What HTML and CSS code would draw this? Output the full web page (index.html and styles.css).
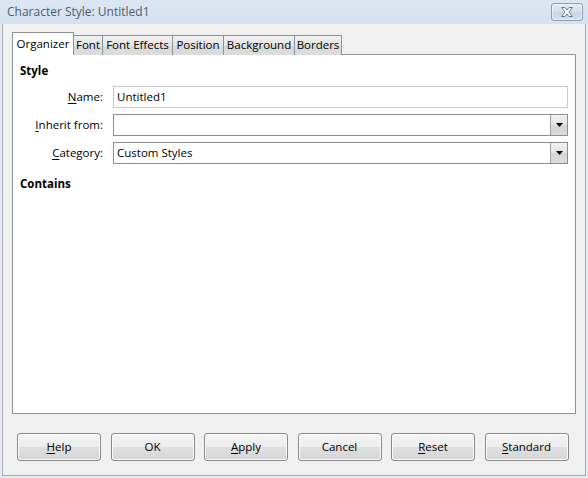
FILE: index.html
```html
<!DOCTYPE html>
<html>
<head>
<meta charset="utf-8">
<link rel="stylesheet" href="styles.css">
</head>
<body>
<div class="window">
  <div class="titlebar">
    <span class="title">Character Style: Untitled1</span>
    <div class="close">
      <svg width="16" height="12" viewBox="0 0 16 12"><path d="M2.5 1.5 H6 L8 4 L10 1.5 H13.5 L10 6 L13.5 10.5 H10 L8 8 L6 10.5 H2.5 L6 6 Z" fill="#f7f9fc" stroke="#6d7b8c" stroke-width="1" stroke-linejoin="round"/></svg>
    </div>
  </div>
  <div class="client">
    <div class="tabs">
      <div class="tab active t1">Organizer</div>
      <div class="tab t2">Font</div>
      <div class="tab t3">Font Effects</div>
      <div class="tab t4">Position</div>
      <div class="tab t5">Background</div>
      <div class="tab t6">Borders</div>
    </div>
    <div class="panel">
      <div class="heading">Style</div>
      <div class="form">
        <label class="lbl"><u>N</u>ame:</label>
        <div class="field text">Untitled1</div>
        <label class="lbl"><u>I</u>nherit from:</label>
        <div class="field combo"><span class="val"></span><span class="drop"><svg width="7" height="4" viewBox="0 0 7 4"><path d="M0 0 H7 L3.5 4 Z" fill="#000"/></svg></span></div>
        <label class="lbl"><u>C</u>ategory:</label>
        <div class="field combo"><span class="val">Custom Styles</span><span class="drop"><svg width="7" height="4" viewBox="0 0 7 4"><path d="M0 0 H7 L3.5 4 Z" fill="#000"/></svg></span></div>
      </div>
      <div class="heading contains">Contains</div>
    </div>
    <div class="buttons">
      <div class="btn"><u>H</u>elp</div>
      <div class="btn">OK</div>
      <div class="btn"><u>A</u>pply</div>
      <div class="btn">Cancel</div>
      <div class="btn"><u>R</u>eset</div>
      <div class="btn"><u>S</u>tandard</div>
    </div>
  </div>
</div>
</body>
</html>
```
FILE: styles.css
```css
* { box-sizing: border-box; }
html, body { margin: 0; padding: 0; }
body {
  width: 588px;
  height: 478px;
  overflow: hidden;
  font-family: "Open Sans", "Noto Sans", sans-serif;
  font-size: 11.5px;
  color: #000;
  background: #e4e9ef;
}
.window {
  width: 588px;
  height: 478px;
  display: flex;
  flex-direction: column;
  padding: 0 2px 2px 2px;
  background: linear-gradient(#dbe6f3, #d5e2f1 24px, #e6ebf1 24px, #e8ecf1);
}
.titlebar {
  height: 24px;
  display: flex;
  align-items: flex-start;
  justify-content: space-between;
  padding-left: 5px;
}
.title {
  font-size: 12px;
  color: #4f5b68;
  line-height: 26px;
  margin-top: -1px;
}
.close {
  width: 32px;
  height: 18px;
  margin-top: 3px;
  margin-right: 3px;
  border: 1px solid #8d9db1;
  border-radius: 3px;
  background: linear-gradient(#e3ebf4, #d2deeb 50%, #c7d5e6 50%, #d3dfed);
  display: flex;
  align-items: center;
  justify-content: center;
  box-shadow: inset 0 0 0 1px rgba(255,255,255,0.5);
}
.client {
  flex: 1;
  background: #f0f0f0;
  border: 1px solid #a9adb3;
  border-top: none;
  padding: 9px 9px 0 9px;
  display: flex;
  flex-direction: column;
}
.tabs {
  display: flex;
  align-items: flex-end;
  height: 22px;
  position: relative;
  z-index: 1;
  margin-bottom: -1px;
}
.tab {
  height: 20px;
  border: 1px solid #8e9297;
  border-bottom: none;
  margin-left: -1px;
  background: linear-gradient(#f0f0f0, #e5e5e5 50%, #d9d9d9 50%, #dcdcdc);
  line-height: 18px;
  text-align: center;
  white-space: nowrap;
}
.tab.active {
  height: 23px;
  background: #fff;
  margin-left: 0;
  margin-right: 0;
  line-height: 22px;
  position: relative;
  z-index: 2;
}
.t1 { width: 62px; }
.t2 { width: 30px; }
.t3 { width: 71px; }
.t4 { width: 52px; }
.t5 { width: 72px; }
.t6 { width: 48px; }
.panel {
  height: 360px;
  background: #fff;
  border: 1px solid #8e9297;
  padding: 8px 7px 0 7px;
}
.heading {
  font-weight: bold;
  line-height: 16px;
}
.form {
  display: grid;
  grid-template-columns: 83px 1fr;
  column-gap: 10px;
  row-gap: 6px;
  margin-top: 7px;
  align-items: center;
}
.lbl {
  text-align: right;
  line-height: 16px;
}
.lbl u, .btn u { text-decoration: underline; text-underline-offset: 2px; }
.field {
  height: 22px;
  border: 1px solid #c9c9c9;
  background: #fff;
  line-height: 20px;
  padding-left: 3px;
  display: flex;
}
.field.combo {
  border-color: #8f8f8f;
  padding-right: 0;
}
.val { flex: 1; }
.drop {
  width: 17px;
  height: 20px;
  border-left: 1px solid #a0a0a0;
  background: linear-gradient(#f2f2f2, #e3e3e3 50%, #d5d5d5 50%, #dcdcdc);
  display: flex;
  align-items: center;
  justify-content: center;
}
.contains {
  margin-top: 12px;
}
.buttons {
  display: flex;
  gap: 9.5px;
  margin-top: 19px;
  padding-left: 5px;
}
.btn {
  width: 84px;
  height: 28px;
  flex: none;
  border: 1px solid #8a8a8a;
  border-radius: 3px;
  background: linear-gradient(#f4f4f4, #ececec 50%, #dfdfdf 50%, #d6d6d6);
  box-shadow: inset 0 0 0 1px #fbfbfb;
  display: flex;
  align-items: center;
  justify-content: center;
  line-height: 16px;
}
```
